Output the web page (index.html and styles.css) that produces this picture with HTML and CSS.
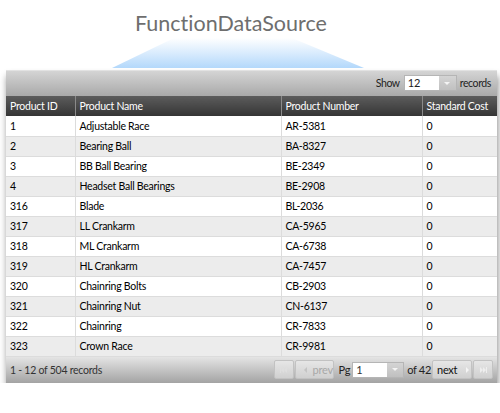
FILE: index.html
```html
<!DOCTYPE html>
<html lang="en">
<head>
    <meta charset="UTF-8">
    <title>FunctionDataSource</title>
    <link rel="stylesheet" href="styles.css">
</head>
<body>
    <div class="hero">
        <h1 class="title">FunctionDataSource</h1>
        <svg class="beam" width="252" height="32" viewBox="0 0 252 32">
            <defs>
                <linearGradient id="beamFill" x1="0" y1="0" x2="0" y2="1">
                    <stop offset="0" stop-color="#ffffff"/>
                    <stop offset="1" stop-color="#b3d8fb"/>
                </linearGradient>
            </defs>
            <polygon points="62,0 180,0 252,30 0,30" fill="url(#beamFill)"/>
        </svg>
    </div>

    <div class="grid">
        <div class="toolbar">
            <span>Show</span>
            <div class="select">
                <span class="select-value">12</span>
                <span class="select-btn"><i class="caret"></i></span>
            </div>
            <span>records</span>
        </div>

        <table class="data">
            <thead>
                <tr>
                    <th class="c-id">Product ID</th>
                    <th class="c-name">Product Name</th>
                    <th class="c-num">Product Number</th>
                    <th class="c-cost">Standard Cost</th>
                </tr>
            </thead>
            <tbody>
                <tr><td>1</td><td>Adjustable Race</td><td>AR-5381</td><td>0</td></tr>
                <tr><td>2</td><td>Bearing Ball</td><td>BA-8327</td><td>0</td></tr>
                <tr><td>3</td><td>BB Ball Bearing</td><td>BE-2349</td><td>0</td></tr>
                <tr><td>4</td><td>Headset Ball Bearings</td><td>BE-2908</td><td>0</td></tr>
                <tr><td>316</td><td>Blade</td><td>BL-2036</td><td>0</td></tr>
                <tr><td>317</td><td>LL Crankarm</td><td>CA-5965</td><td>0</td></tr>
                <tr><td>318</td><td>ML Crankarm</td><td>CA-6738</td><td>0</td></tr>
                <tr><td>319</td><td>HL Crankarm</td><td>CA-7457</td><td>0</td></tr>
                <tr><td>320</td><td>Chainring Bolts</td><td>CB-2903</td><td>0</td></tr>
                <tr><td>321</td><td>Chainring Nut</td><td>CN-6137</td><td>0</td></tr>
                <tr><td>322</td><td>Chainring</td><td>CR-7833</td><td>0</td></tr>
                <tr><td>323</td><td>Crown Race</td><td>CR-9981</td><td>0</td></tr>
            </tbody>
        </table>

        <div class="footer">
            <span class="summary">1 - 12 of 504 records</span>
            <div class="pager">
                <span class="btn btn-icon disabled">
                    <svg width="7" height="6" viewBox="0 0 7 6"><rect x="0" y="0" width="1" height="6" fill="currentColor"/><polygon points="1,3 4,0 4,6" fill="currentColor"/><polygon points="4,3 7,0 7,6" fill="currentColor"/></svg>
                </span>
                <span class="btn btn-prev disabled"><i class="arrow-left"></i>prev</span>
                <span class="pg">Pg</span>
                <div class="select select-page">
                    <span class="select-value">1</span>
                    <span class="select-btn"><i class="caret"></i></span>
                </div>
                <span class="of">of 42</span>
                <span class="btn btn-next">next<i class="arrow-right"></i></span>
                <span class="btn btn-icon">
                    <svg width="7" height="6" viewBox="0 0 7 6"><polygon points="0,0 3,3 0,6" fill="currentColor"/><polygon points="3,0 6,3 3,6" fill="currentColor"/><rect x="6" y="0" width="1" height="6" fill="currentColor"/></svg>
                </span>
            </div>
        </div>
    </div>
</body>
</html>
```

FILE: styles.css
```css
* {
    box-sizing: border-box;
    margin: 0;
    padding: 0;
}

body {
    font-family: Lato, "Open Sans", sans-serif;
    font-variant-ligatures: none;
    background-color: #fff;
    color: #000;
}

.hero {
    height: 70px;
    padding-top: 9px;
}

.title {
    font-size: 21.5px;
    font-weight: 400;
    line-height: 28px;
    color: #6e6e6e;
    padding-left: 135px;
}

.beam {
    display: block;
    margin-left: 112px;
    margin-top: 1px;
}

.grid {
    margin-left: 6px;
    width: 491px;
    font-size: 10.5px;
    letter-spacing: -0.25px;
    box-shadow: 1px 6px 7px rgba(0, 0, 0, 0.45);
}

.toolbar {
    height: 26px;
    display: flex;
    align-items: center;
    justify-content: flex-end;
    gap: 3px;
    padding-right: 6px;
    color: #222;
    letter-spacing: -0.4px;
    background: linear-gradient(#d6d6d6, #a9a9a9);
    box-shadow: inset 0 1px 0 #e2e2e2;
}

.select {
    display: flex;
    height: 16px;
    margin-left: 1px;
    border: 1px solid #b5b5b5;
}

.select-value {
    width: 34px;
    background-color: #fff;
    line-height: 14px;
    padding-left: 3px;
    font-size: 11px;
    letter-spacing: 0;
}

.select-btn {
    width: 17px;
    display: flex;
    align-items: center;
    justify-content: center;
    background: linear-gradient(#d4d4d4, #c0c0c0);
}

.caret {
    border-left: 3px solid transparent;
    border-right: 3px solid transparent;
    border-top: 3px solid #f4f4f4;
}

.data {
    width: 100%;
    border-collapse: collapse;
    table-layout: fixed;
}

.data th {
    height: 20px;
    text-align: left;
    font-weight: 400;
    color: #fff;
    padding-left: 4px;
    background: linear-gradient(#5c5c5c, #353535);
    border-left: 1px solid #8a8a8a;
}

.data th:first-child {
    border-left: none;
}

.c-id { width: 69px; }
.c-name { width: 206px; }
.c-num { width: 141px; }
.c-cost { width: 75px; }

.data td {
    height: 20px;
    padding-left: 4px;
    border-left: 1px solid #dcdcdc;
    border-bottom: 1px solid #dcdcdc;
    white-space: nowrap;
}

.data td:first-child {
    border-left: none;
}

.data tbody tr:nth-child(even) td {
    background-color: #ececec;
}

.footer {
    height: 26px;
    display: flex;
    align-items: center;
    justify-content: space-between;
    padding: 0 3px 0 4px;
    color: #333;
    background: linear-gradient(#e4e4e4, #a3a3a3);
}

.pager {
    display: flex;
    align-items: center;
}

.btn {
    height: 19px;
    display: flex;
    align-items: center;
    margin-right: 1px;
    border: 1px solid #c2c2c2;
    border-radius: 2px;
    background: linear-gradient(#e6e6e6, #d0d0d0);
    color: #111;
    font-size: 11px;
}

.btn.disabled {
    color: #a8a8a8;
}

.btn-icon {
    width: 20px;
    justify-content: center;
    color: #eeeeee;
}

.btn-icon.disabled {
    color: #dedede;
}

.btn-prev {
    width: 39px;
    gap: 6px;
    padding-left: 8px;
}

.btn-next {
    width: 40px;
    gap: 9px;
    padding-left: 4px;
}

.arrow-left,
.arrow-right {
    border-top: 3px solid transparent;
    border-bottom: 3px solid transparent;
}

.arrow-left {
    border-right: 3px solid #c4c4c4;
}

.arrow-right {
    border-left: 3px solid #f4f4f4;
}

.pg {
    margin: 0 2px 0 4px;
    color: #222;
    font-size: 11px;
}

.select-page {
    margin: 0 3px 0 0;
}

.select-page .select-value {
    width: 34px;
}

.select-page .select-btn {
    width: 16px;
}

.of {
    margin-right: 1px;
    color: #222;
    font-size: 11px;
    letter-spacing: -0.3px;
}
```
